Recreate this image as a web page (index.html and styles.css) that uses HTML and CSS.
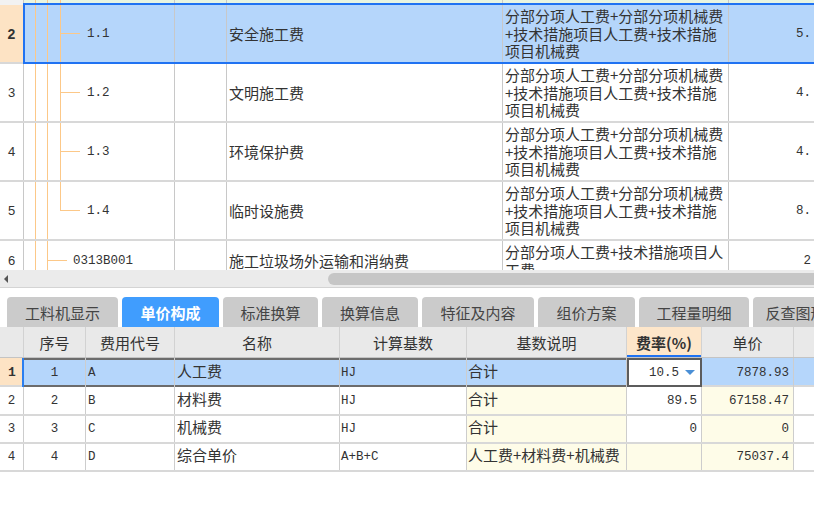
FILE: index.html
```html
<!DOCTYPE html>
<html lang="zh-CN">
<head>
<meta charset="utf-8">
<title>单价构成</title>
<link rel="stylesheet" href="styles.css">
</head>
<body>
<div class="upper">
  <div class="trow strip">
    <div class="rn"></div>
    <div class="cells">
      <div class="c tree l3"></div>
      <div class="c c3"></div>
      <div class="c name"></div>
      <div class="c formula"></div>
      <div class="c num"></div>
    </div>
  </div>
  <div class="trow sel">
    <div class="rn"><b>2</b></div>
    <div class="cells">
      <div class="c tree l3"><span class="br"></span><span class="mono">1.1</span></div>
      <div class="c c3"></div>
      <div class="c name">安全施工费</div>
      <div class="c formula">分部分项人工费+分部分项机械费+技术措施项目人工费+技术措施项目机械费</div>
      <div class="c num mono">5.</div>
    </div>
  </div>
  <div class="trow">
    <div class="rn">3</div>
    <div class="cells">
      <div class="c tree l3"><span class="br"></span><span class="mono">1.2</span></div>
      <div class="c c3"></div>
      <div class="c name">文明施工费</div>
      <div class="c formula">分部分项人工费+分部分项机械费+技术措施项目人工费+技术措施项目机械费</div>
      <div class="c num mono">4.</div>
    </div>
  </div>
  <div class="trow">
    <div class="rn">4</div>
    <div class="cells">
      <div class="c tree l3"><span class="br"></span><span class="mono">1.3</span></div>
      <div class="c c3"></div>
      <div class="c name">环境保护费</div>
      <div class="c formula">分部分项人工费+分部分项机械费+技术措施项目人工费+技术措施项目机械费</div>
      <div class="c num mono">4.</div>
    </div>
  </div>
  <div class="trow">
    <div class="rn">5</div>
    <div class="cells">
      <div class="c tree l3end"><span class="br"></span><span class="mono">1.4</span></div>
      <div class="c c3"></div>
      <div class="c name">临时设施费</div>
      <div class="c formula">分部分项人工费+分部分项机械费+技术措施项目人工费+技术措施项目机械费</div>
      <div class="c num mono">8.</div>
    </div>
  </div>
  <div class="trow short">
    <div class="rn">6</div>
    <div class="cells">
      <div class="c tree l2"><span class="br br2"></span><span class="mono">0313B001</span></div>
      <div class="c c3"></div>
      <div class="c name">施工垃圾场外运输和消纳费</div>
      <div class="c formula">分部分项人工费+技术措施项目人工费</div>
      <div class="c num mono">2</div>
    </div>
  </div>
</div>

<div class="hscroll"><span class="arrow"></span><span class="thumb"></span></div>

<div class="tabs">
  <div class="tab w1">工料机显示</div>
  <div class="tab active w2">单价构成</div>
  <div class="tab w3">标准换算</div>
  <div class="tab w4">换算信息</div>
  <div class="tab w5">特征及内容</div>
  <div class="tab w6">组价方案</div>
  <div class="tab w7">工程量明细</div>
  <div class="tab w8">反查图形工程量</div>
</div>

<div class="grid">
  <div class="grow ghead">
    <div class="g g0"></div>
    <div class="g g1 ctr">序号</div>
    <div class="g g2 ctr">费用代号</div>
    <div class="g g3 ctr">名称</div>
    <div class="g g4 ctr">计算基数</div>
    <div class="g g5 ctr">基数说明</div>
    <div class="g g6 ctr rate-h">费率(%)</div>
    <div class="g g7 ctr">单价</div>
    <div class="g g8"></div>
  </div>
  <div class="grow gsel">
    <div class="g g0 ctr mono rn-sel"><b>1</b></div>
    <div class="g g1 ctr mono hl">1</div>
    <div class="g g2 mono hl">A</div>
    <div class="g g3 cjk hl">人工费</div>
    <div class="g g4 mono hl">HJ</div>
    <div class="g g5 cjk hl">合计</div>
    <div class="g g6 edit"><span class="mono">10.5</span><span class="dd"></span></div>
    <div class="g g7 rt mono">7878.93</div>
    <div class="g g8"></div>
  </div>
  <div class="grow">
    <div class="g g0 ctr mono">2</div>
    <div class="g g1 ctr mono">2</div>
    <div class="g g2 mono">B</div>
    <div class="g g3 cjk">材料费</div>
    <div class="g g4 mono">HJ</div>
    <div class="g g5 cjk yl">合计</div>
    <div class="g g6 rt mono">89.5</div>
    <div class="g g7 rt mono yl">67158.47</div>
    <div class="g g8"></div>
  </div>
  <div class="grow">
    <div class="g g0 ctr mono">3</div>
    <div class="g g1 ctr mono">3</div>
    <div class="g g2 mono">C</div>
    <div class="g g3 cjk">机械费</div>
    <div class="g g4 mono">HJ</div>
    <div class="g g5 cjk yl">合计</div>
    <div class="g g6 rt mono">0</div>
    <div class="g g7 rt mono yl">0</div>
    <div class="g g8"></div>
  </div>
  <div class="grow">
    <div class="g g0 ctr mono">4</div>
    <div class="g g1 ctr mono">4</div>
    <div class="g g2 mono">D</div>
    <div class="g g3 cjk">综合单价</div>
    <div class="g g4 mono">A+B+C</div>
    <div class="g g5 cjk yl">人工费+材料费+机械费</div>
    <div class="g g6 yl"></div>
    <div class="g g7 rt mono yl">75037.4</div>
    <div class="g g8"></div>
  </div>
</div>
</body>
</html>
```
FILE: styles.css
```css
* { box-sizing: border-box; margin: 0; padding: 0; }
html, body { width: 814px; height: 519px; overflow: hidden; background: #fff; }
body {
  font-family: "Noto Sans CJK SC", "Noto Sans", sans-serif;
  font-size: 15px;
  color: #333;
}
.mono { font-family: "Liberation Mono", monospace; font-size: 12.5px; }

/* upper grid */
.upper { height: 270px; overflow: hidden; }
.trow { display: flex; height: 59px; border-bottom: 2px solid #d8d8d8; width: 830px; }
.trow.strip { height: 5px; border-bottom: none; }
.trow.strip .cells { background: #e8f5e2; }
.trow.strip .rn { background: #f2f2f2; }
.trow.short { height: 41px; }
.rn {
  flex: none; width: 24px; border-right: 1px solid #c8c8c8;
  display: flex; align-items: center; justify-content: center;
  font-family: "Liberation Sans", sans-serif; font-size: 13px; color: #333;
}
.cells { flex: none; display: flex; }
.c { flex: none; height: 100%; border-right: 1px solid #c8c8c8; display: flex; align-items: center; overflow: hidden; }
.tree { width: 151px; background-repeat: no-repeat; }
.c3 { width: 52px; }
.name { width: 276px; padding-left: 2px; }
.formula { width: 226px; padding-left: 2px; line-height: 17.5px; }
.num { width: 101px; justify-content: flex-end; padding-right: 18px; }

.l3, .l3end, .l2 {
  background-image:
    linear-gradient(#fcc888, #fcc888),
    linear-gradient(#fcc888, #fcc888),
    linear-gradient(#fcc888, #fcc888);
  background-repeat: no-repeat;
}
.l3 { background-size: 1px 100%, 1px 100%, 1px 100%; background-position: 11px 0, 23px 0, 36px 0; }
.l3end { background-size: 1px 100%, 1px 100%, 1px 50%; background-position: 11px 0, 23px 0, 36px 0; }
.l2 { background-size: 1px 100%, 1px 100%, 0 0; background-position: 11px 0, 23px 0, 0 0; }
.br { flex: none; width: 20px; height: 1px; background: #fcc888; margin-left: 36px; margin-right: 7px; }
.br.br2 { margin-left: 23px; margin-right: 6px; }

.trow.sel .rn { background: #fde3c4; font-size: 14px; }
.trow.sel .cells { background: #b5d6fb; position: relative; }
.trow.sel .cells::after {
  content: ""; position: absolute; left: -1px; top: -2px; right: 0; bottom: -2px;
  border: 2px solid #1f72f2; border-right: none;
}

/* scrollbar */
.hscroll { height: 18px; background: #ebebeb; border-bottom: 1px solid #d4d4d4; display: flex; align-items: center; }
.arrow { flex: none; width: 0; height: 0; border-right: 4px solid #555; border-top: 4px solid transparent; border-bottom: 4px solid transparent; margin-left: 4px; }
.thumb { flex: 1; height: 12px; margin-left: 320px; border-radius: 6px 0 0 6px; background: #c6c6c6; }

/* tabs */
.tabs { height: 39px; padding: 9px 0 0 7px; display: flex; gap: 4px; align-items: flex-end; white-space: nowrap; }
.tab {
  flex: none; height: 30px; border-radius: 4px 4px 0 0; background: #cbcbcb;
  display: flex; align-items: center; justify-content: center; color: #444;
}
.tab.active { background: #409dfe; color: #fff; font-weight: bold; }
.w1 { width: 111px; } .w2 { width: 97px; } .w3 { width: 95px; } .w4 { width: 96px; }
.w5 { width: 112px; } .w6 { width: 97px; } .w7 { width: 110px; } .w8 { width: 130px; }

/* lower grid */
.grow { display: flex; height: 28px; border-bottom: 2px solid #d8d8d8; width: 880px; }
.grow:nth-child(3) { height: 29px; }
.g { flex: none; height: 100%; border-right: 1px solid #cdcdcd; display: flex; align-items: center; padding: 0 2px; white-space: nowrap; overflow: hidden; }
.g.cjk { padding-bottom: 5px; }
.g0 { width: 24px; }
.g1 { width: 62px; }
.g2 { width: 89px; }
.g3 { width: 165px; }
.g4 { width: 127px; padding-left: 1px; }
.g5 { width: 160px; padding-left: 1px; }
.g6 { width: 75px; padding-right: 4px; }
.g7 { width: 92px; padding-right: 4px; }
.g8 { width: 86px; }
.ctr { justify-content: center; padding: 0; }
.rt { justify-content: flex-end; }
.yl { background: #fefce8; }

.ghead { height: 31px; background: #e9e9e9; border-bottom: 1px solid #c4c4c4; }
.ghead .g { border-right-color: #d2d2d2; }
.rate-h { background: #fde6ca; font-weight: bold; box-shadow: inset 0 -2px 0 #1f72f2; }

.gsel { height: 29px; border-bottom: none; background: #b5d6fb; }
.gsel .rn-sel { background: #fde3c4; border-right: none; box-shadow: inset -2px 0 0 #2a7ef0, inset 0 -2px 0 #d8d8d8; font-size: 13px; }
.gsel .hl { box-shadow: inset 0 2px 0 #6c6c6c, inset 0 -2px 0 #6c6c6c; }
.gsel .g7, .gsel .g8 { box-shadow: inset 0 -2px 0 #d8d8d8; }
.edit { background: #fff; border: 2px solid #5c5c5c; justify-content: flex-end; padding-right: 5px; }
.dd { flex: none; width: 0; height: 0; margin-left: 6px; border-top: 5px solid #4a8fd6; border-left: 5px solid transparent; border-right: 5px solid transparent; }
```
